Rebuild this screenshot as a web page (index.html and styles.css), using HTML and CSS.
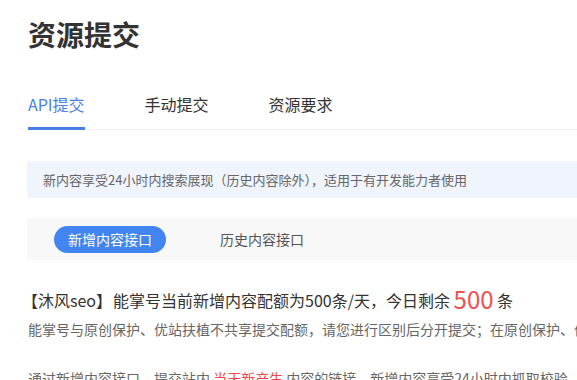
FILE: index.html
```html
<!DOCTYPE html>
<html lang="zh-CN">
<head>
  <meta charset="UTF-8">
  <title>资源提交</title>
  <link rel="stylesheet" href="styles.css">
</head>
<body>
  <div class="page">
    <h1 class="title">资源提交</h1>

    <div class="tabs">
      <div class="tab active">API提交</div>
      <div class="tab">手动提交</div>
      <div class="tab">资源要求</div>
    </div>

    <div class="notice">新内容享受24小时内搜索展现（历史内容除外），适用于有开发能力者使用</div>

    <div class="sub-tabs">
      <span class="pill active">新增内容接口</span>
      <span class="pill">历史内容接口</span>
    </div>

    <p class="quota"><span class="site">【沐风seo】</span>能掌号当前新增内容配额为500条/天，今日剩余 <span class="count">500</span> 条</p>
    <p class="quota-note">能掌号与原创保护、优站扶植不共享提交配额，请您进行区别后分开提交；在原创保护、优站扶植提交的内容不计入配额</p>

    <p class="desc">通过新增内容接口，提交站内 <span class="hot">当天新产生</span> 内容的链接。新增内容享受24小时内抓取校验，</p>
  </div>
</body>
</html>
```

FILE: styles.css
```css
body {
  margin: 0;
  overflow: hidden;
  background: #fff;
  color: #333;
  font-family: "Noto Sans CJK SC", "Noto Sans", sans-serif;
}
.page {
  width: 720px;
  padding-left: 28px;
}
.title {
  margin: 0;
  padding-top: 18px;
  font-size: 28px;
  line-height: 32px;
  font-weight: bold;
  color: #333;
}
.tabs {
  display: flex;
  gap: 60px;
  margin-top: 42px;
  border-bottom: 1px solid #eceef2;
}
.tab {
  font-size: 16px;
  line-height: 24px;
  padding-bottom: 11px;
  margin-bottom: -1px;
  border-bottom: 3px solid transparent;
  color: #333;
}
.tab.active {
  color: #4a7fe8;
  border-bottom-color: #4a7fe8;
}
.notice {
  margin: 31px 0 0 -1px;
  height: 37px;
  line-height: 37px;
  padding-left: 16px;
  background: #eff4fd;
  font-size: 13px;
  color: #666;
}
.sub-tabs {
  display: flex;
  align-items: center;
  gap: 40px;
  margin: 20px 0 0 -1px;
  padding: 8px 27px 7px;
  background: #f8f8f8;
}
.pill {
  height: 27px;
  line-height: 27px;
  padding: 0 14px;
  border-radius: 14px;
  font-size: 14px;
  color: #555;
}
.pill.active {
  background: #4285f0;
  color: #fff;
}
.quota {
  margin: 24px 0 0 -6px;
  font-size: 16px;
  line-height: 30px;
  color: #333;
}
.site {
  margin-right: 1px;
}
.count {
  font-size: 24px;
  color: #f05050;
  vertical-align: -2px;
}
.quota-note {
  margin: 3px 0 0;
  font-size: 14px;
  line-height: 22px;
  color: #666;
  white-space: nowrap;
}
.desc {
  margin: 27px 0 0;
  font-size: 14px;
  line-height: 22px;
  color: #666;
  white-space: nowrap;
}
.hot {
  color: #f04848;
}
```
